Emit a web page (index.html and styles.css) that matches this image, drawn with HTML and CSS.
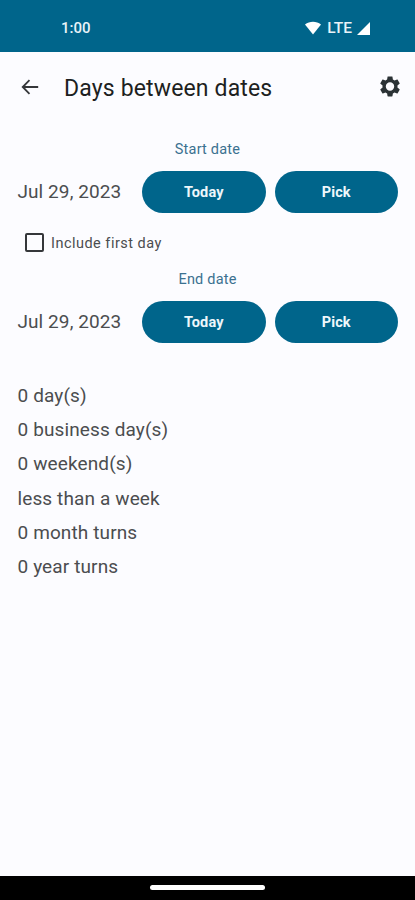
FILE: index.html
```html
<!DOCTYPE html>
<html lang="en">
<head>
<meta charset="utf-8">
<title>Days between dates</title>
<link rel="stylesheet" href="styles.css">
</head>
<body>
<header class="status">
  <span class="time">1:00</span>
  <div class="signals">
    <svg class="wifi" viewBox="0 0 16 13"><path d="M0 3C4.500-.8 11.500-.8 16 3L8 13Z"/></svg>
    <span>LTE</span>
    <svg class="cell" viewBox="0 0 13 13"><path d="M13 0V13H0Z"/></svg>
  </div>
</header>
<nav class="appbar">
  <svg class="back" viewBox="0 0 18 16"><path d="M17.200 8H2M8.500 1.200L1.700 8l6.800 6.800"/></svg>
  <h1>Days between dates</h1>
  <svg class="gear" viewBox="2 2 20 20"><path fill-rule="evenodd" d="M19.430 12.980c.04-.32.070-.64.070-.98s-.03-.66-.07-.98l2.110-1.650c.19-.15.240-.42.120-.64l-2-3.460c-.12-.22-.39-.3-.61-.22l-2.490 1c-.52-.4-1.080-.73-1.690-.98l-.38-2.650C14.460 2.180 14.250 2 14 2h-4c-.25 0-.46.180-.49.420l-.38 2.650c-.61.250-1.170.590-1.690.980l-2.490-1c-.23-.09-.49 0-.61.220l-2 3.460c-.13.220-.07.490.120.640l2.110 1.650c-.04.320-.07.650-.07.980s.03.660.070.980l-2.110 1.650c-.19.150-.24.420-.12.640l2 3.460c.12.220.390.300.610.220l2.490-1c.52.400 1.080.730 1.690.980l.38 2.650c.03.240.240.420.490.420h4c.25 0 .46-.18.490-.42l.38-2.650c.61-.25 1.170-.59 1.690-.98l2.490 1c.23.090.490 0 .610-.22l2-3.460c.12-.22.070-.49-.12-.64zM12 16.200a4.200 4.200 0 1 1 0-8.400 4.200 4.200 0 0 1 0 8.400z"/></svg>
</nav>
<main>
  <section class="group">
    <h2>Start date</h2>
    <div class="row"><span class="date">Jul 29, 2023</span><button>Today</button><button>Pick</button></div>
  </section>
  <label class="check"><span class="box"></span><span class="caption">Include first day</span></label>
  <section class="group">
    <h2>End date</h2>
    <div class="row"><span class="date">Jul 29, 2023</span><button>Today</button><button>Pick</button></div>
  </section>
  <ul class="results">
    <li>0 day(s)</li>
    <li>0 business day(s)</li>
    <li>0 weekend(s)</li>
    <li>less than a week</li>
    <li>0 month turns</li>
    <li>0 year turns</li>
  </ul>
</main>
<footer class="navbar"><span class="handle"></span></footer>
</body>
</html>
```
FILE: styles.css
```css
* { box-sizing: border-box; }
body {
  margin: 0;
  height: 900px;
  display: flex;
  flex-direction: column;
  overflow: hidden;
  background: #fcfcff;
  color: #4b4d4f;
  font-family: Roboto, sans-serif;
}
h1, h2, ul { margin: 0; padding: 0; font-weight: 400; }
.status {
  height: 52px;
  padding: 4px 45px 0 61px;
  display: flex;
  align-items: center;
  justify-content: space-between;
  background: #00658b;
  color: #e9f3f8;
  font-size: 15px;
  font-weight: 500;
}
.signals { display: flex; align-items: center; gap: 6px; font-size: 15.500px; }
.signals svg { fill: #fff; }
.wifi { width: 16px; height: 14px; }
.cell { width: 13px; height: 13px; margin-left: -1px; }
.appbar {
  height: 71px;
  padding: 0 15px 2px 21px;
  display: flex;
  align-items: center;
  color: #1d1f21;
}
.back { width: 18px; height: 16px; fill: none; stroke: #35373a; stroke-width: 1.8; }
.appbar h1 { flex: 1; margin-left: 25px; font-size: 23px; line-height: 30px; letter-spacing: .15px; padding-top: 5px; }
.gear { width: 20px; height: 21px; fill: #2b3235; }
main { flex: 1; padding: 15px 17px 0; }
.group h2 {
  height: 33px;
  line-height: 23px;
  text-align: center;
  color: #3b7190;
  font-size: 14.500px;
  letter-spacing: .2px;
}
.row { display: grid; grid-template-columns: 116.500px 123.500px 123.500px; column-gap: 9px; align-items: center; margin-left: -.5px; }
.date { padding: 0 0 2px 1px; font-size: 19px; letter-spacing: .08px; white-space: nowrap; }
button {
  height: 42px;
  padding: 1px 0 0;
  border: 0;
  border-radius: 21px;
  background: #00658b;
  color: #eef7fb;
  font: 700 14.500px Roboto, sans-serif;
  letter-spacing: .1px;
}
.check {
  height: 55px;
  padding: 4px 0 0 8px;
  display: flex;
  align-items: center;
  gap: 7px;
  font-size: 14.500px;
  letter-spacing: .48px;
}
.box { width: 19px; height: 19px; border: 2px solid #35373a; border-radius: 2px; }
.caption { padding-top: 2px; }
.results { margin-top: 36px; padding-left: .5px; list-style: none; font-size: 19px; line-height: 34.200px; letter-spacing: .12px; }
.navbar { height: 24px; padding-bottom: 1px; display: flex; justify-content: center; align-items: center; background: #000; }
.handle { width: 115px; height: 5px; border-radius: 3px; background: #fff; }
```
